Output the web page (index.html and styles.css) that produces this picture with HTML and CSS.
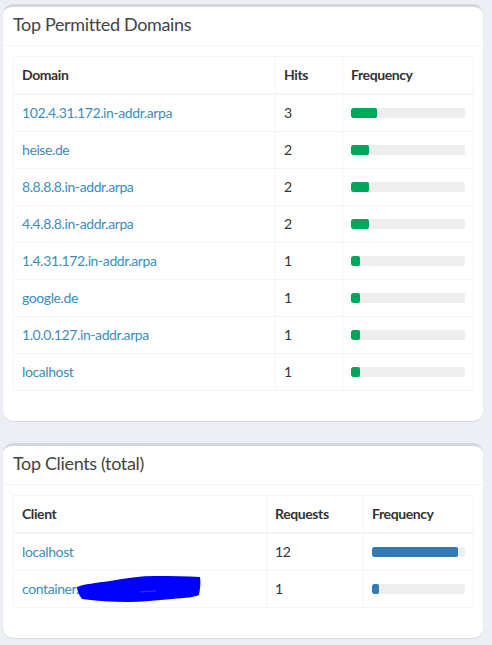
FILE: index.html
```html
<!DOCTYPE html>
<html>
<head>
<meta charset="utf-8">
<link rel="stylesheet" href="styles.css">
</head>
<body>
<div class="page">
  <section class="box">
    <header class="box-header"><h3 class="box-title">Top Permitted Domains</h3></header>
    <div class="box-body">
      <table class="tbl">
        <colgroup><col class="c-domain"><col class="c-hits"><col class="c-freq"></colgroup>
        <thead><tr><th>Domain</th><th>Hits</th><th>Frequency</th></tr></thead>
        <tbody>
          <tr><td><a>102.4.31.172.in-addr.arpa</a></td><td>3</td><td><div class="bar"><div class="fill green" style="width:23.08%"></div></div></td></tr>
          <tr><td><a>heise.de</a></td><td>2</td><td><div class="bar"><div class="fill green" style="width:15.38%"></div></div></td></tr>
          <tr><td><a>8.8.8.8.in-addr.arpa</a></td><td>2</td><td><div class="bar"><div class="fill green" style="width:15.38%"></div></div></td></tr>
          <tr><td><a>4.4.8.8.in-addr.arpa</a></td><td>2</td><td><div class="bar"><div class="fill green" style="width:15.38%"></div></div></td></tr>
          <tr><td><a>1.4.31.172.in-addr.arpa</a></td><td>1</td><td><div class="bar"><div class="fill green" style="width:7.69%"></div></div></td></tr>
          <tr><td><a>google.de</a></td><td>1</td><td><div class="bar"><div class="fill green" style="width:7.69%"></div></div></td></tr>
          <tr><td><a>1.0.0.127.in-addr.arpa</a></td><td>1</td><td><div class="bar"><div class="fill green" style="width:7.69%"></div></div></td></tr>
          <tr><td><a>localhost</a></td><td>1</td><td><div class="bar"><div class="fill green" style="width:7.69%"></div></div></td></tr>
        </tbody>
      </table>
    </div>
  </section>
  <section class="box">
    <header class="box-header"><h3 class="box-title">Top Clients (total)</h3></header>
    <div class="box-body">
      <table class="tbl">
        <colgroup><col class="c-client"><col class="c-req"><col class="c-freq2"></colgroup>
        <thead><tr><th>Client</th><th>Requests</th><th>Frequency</th></tr></thead>
        <tbody>
          <tr><td><a>localhost</a></td><td>12</td><td><div class="bar"><div class="fill blue" style="width:92.31%"></div></div></td></tr>
          <tr><td class="redact-cell"><a>container.</a><svg class="blob" width="126" height="28" viewBox="0 0 126 28"><path d="M1 12 C8 9 20 8 34 6 C50 3 64 1 80 1 C96 1 110 1 124 2 C125 8 124 14 123 20 C118 22 110 23 96 24 C80 25 66 27 52 27 C36 27 20 26 6 24 C3 20 1 16 1 12 Z" fill="#0000ff"/><path d="M64 17 L80 16" stroke="#3a3aff" stroke-width="1"/></svg></td><td>1</td><td><div class="bar"><div class="fill blue" style="width:7.69%"></div></div></td></tr>
        </tbody>
      </table>
    </div>
  </section>
</div>
</body>
</html>
```
FILE: styles.css
```css
* { box-sizing: border-box; }
html, body { margin: 0; padding: 0; }
body {
  background: #ecf0f5;
  font-family: "Source Sans Pro", Lato, "Open Sans", sans-serif;
  font-size: 14px;
  color: #333;
}
.page {
  padding: 4px 9px 0 3px;
}
.box {
  background: #fff;
  border-top: 3px solid #d2d6de;
  border-radius: 10px;
  box-shadow: 0 1px 1px rgba(0,0,0,0.1);
  margin-bottom: 22px;
}
.box-header {
  height: 39px;
  border-bottom: 1px solid #f4f4f4;
  padding: 8px 10px 0 10px;
  display: flex;
  align-items: flex-start;
}
.box-title {
  margin: 0;
  font-size: 18px;
  font-weight: normal;
  color: #444;
  line-height: 1;
  letter-spacing: -0.35px;
}
.box-body {
  padding: 10px 10px 30px 10px;
}
.tbl {
  width: 100%;
  border-collapse: collapse;
  table-layout: fixed;
  border: 1px solid #f4f4f4;
  letter-spacing: -0.4px;
}
.tbl th, .tbl td {
  border: 1px solid #f4f4f4;
  padding: 8px;
  line-height: 20px;
  text-align: left;
  vertical-align: middle;
  white-space: nowrap;
}
.tbl th {
  font-weight: bold;
  border-bottom-width: 2px;
  color: #333;
}
.tbl a { color: #3c8dbc; text-decoration: none; }
.c-domain { width: 262px; }
.c-hits { width: 67px; }
.c-freq { width: 131px; }
.c-client { width: 253px; }
.c-req { width: 97px; }
.c-freq2 { width: 110px; }
.bar {
  height: 10px;
  background: #eeeeee;
  border-radius: 2px;
  overflow: hidden;
}
.fill { height: 100%; border-radius: 2px; }
.green { background: #00a65a; }
.blue { background: #337ab7; }
.redact-cell { position: relative; }
.blob {
  position: absolute;
  left: 62px;
  top: 4px;
}
```
